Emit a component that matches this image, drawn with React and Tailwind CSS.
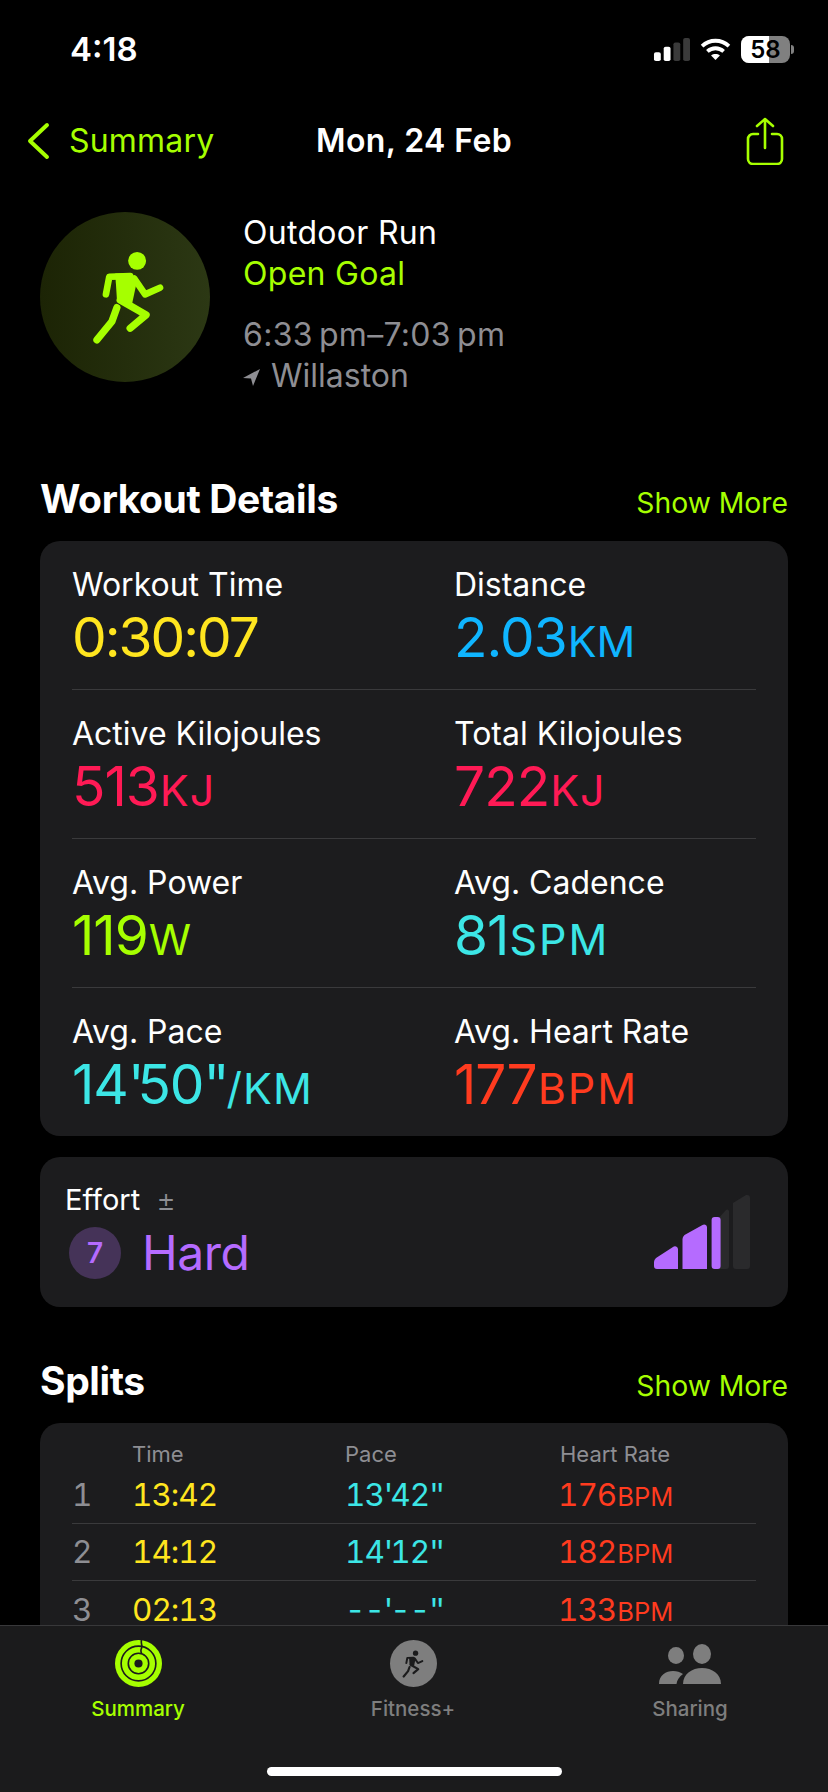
import React from "react";

const F = { fontFamily: '"Inter","Liberation Sans",sans-serif' };

function Metric({ label, value, unit, color, valueClass = "tracking-[-1px]", unitClass = "tracking-[1px]" }) {
  return (
    <div className="flex-1 min-w-0">
      <div className="text-[32px] leading-[38px] text-white">{label}</div>
      <div className={`text-[55px] leading-[58px] mt-[4px] ${color} ${valueClass}`}>
        {value}
        <span className={`text-[43px] ml-[1px] ${unitClass}`}>{unit}</span>
      </div>
    </div>
  );
}

function Row({ left, right, last }) {
  return (
    <div className={`mx-[32px] h-[149px] pt-[25px] flex ${last ? "" : "border-b border-[#3a3a3c]"}`}>
      <div className="w-[382px]"><Metric {...left} /></div>
      <div className="flex-1"><Metric {...right} /></div>
    </div>
  );
}

function Pr({ className, children }) {
  return <span className={className}>{children}</span>;
}

function Pace({ a, b }) {
  return (
    <>
      {a}
      <span className="tracking-[-3px]">'</span>
      {b}
      <span className="tracking-[-3px]">''</span>
    </>
  );
}

function SplitRow({ n, time, pace, hr, last }) {
  return (
    <div className={`flex h-[57px] items-center text-[31.5px] tabular-nums tracking-[-1px] ${last ? "" : "border-b border-[#3a3a3c]"}`}>
      <div className="w-[60px] text-[#8e8e93]">{n}</div>
      <div className="w-[213px] text-[#ffe51f]">{time}</div>
      <div className="w-[215px] text-[#3ce6e6]">{pace}</div>
      <div className="text-[#ff3b1f] -ml-[2px]">{hr}<span className="text-[25.5px] ml-[1px] tracking-[0px]">BPM</span></div>
    </div>
  );
}

function Runner({ width, height, color }) {
  return (
    <svg width={width} height={height} viewBox="95 85 220 285" fill="none" stroke={color} strokeLinecap="round" strokeLinejoin="round">
      <circle cx="231" cy="117" r="27" fill={color} stroke="none" />
      <path d="M137 218L147 165 210 163" strokeWidth="20" />
      <path d="M165 155L215 155 228 190 215 250 170 232Z" fill={color} stroke="none" />
      <path d="M222 170L255 218 300 198" strokeWidth="20" />
      <path d="M180 235L258 280 210 320" strokeWidth="22" />
      <path d="M170 258L155 300 110 355" strokeWidth="22" />
    </svg>
  );
}

export default function App() {
  return (
    <div style={F} className="relative w-[828px] h-[1792px] bg-black overflow-hidden text-white">
      {/* status bar */}
      <div className="flex items-center justify-between h-[99px] pl-[70px] pr-[34px]">
        <div className="text-[33px] font-semibold">4:18</div>
        <div className="flex items-center gap-[10px]">
          <svg width="37" height="23" viewBox="0 0 38 26" preserveAspectRatio="none">
            <rect x="1" y="16" width="7" height="10" rx="2" fill="#fff" />
            <rect x="11" y="10" width="7" height="16" rx="2" fill="#fff" />
            <rect x="21" y="5" width="7" height="21" rx="2" fill="#3a3a3a" />
            <rect x="31" y="0" width="7" height="26" rx="2" fill="#3a3a3a" />
          </svg>
          <svg width="31" height="23" viewBox="0 0 32 24" fill="none" stroke="#fff" strokeWidth="4">
            <path d="M2 8.5C10 1 22 1 30 8.5" />
            <path d="M7.5 14c5-4.4 12-4.4 17 0" />
            <path d="M16 23l-4.6-4.8c2.6-2 6.600-2 9.200 0z" fill="#fff" stroke="none" />
          </svg>
          <div className="flex items-center">
            <div className="relative w-[49px] h-[27px] rounded-[8px] bg-[#808080] flex items-center justify-center">
              <div className="absolute left-0 top-0 bottom-0 w-[28px] rounded-l-[8px] bg-white" />
              <span className="relative text-[24px] font-semibold text-black leading-[27px]">58</span>
            </div>
            <div className="w-[3px] h-[9px] ml-[1px] rounded-r-full bg-[#808080]" />
          </div>
        </div>
      </div>

      {/* nav */}
      <div className="relative h-[84px] flex items-center pl-[26px] pr-[44px] justify-between">
        <div className="flex items-center text-[#a6ff00]">
          <svg width="24" height="38" viewBox="0 0 24 38" fill="none" stroke="#a6ff00" strokeWidth="4" strokeLinecap="round" strokeLinejoin="round">
            <path d="M21 3L4 19l17 16" />
          </svg>
          <span className="text-[32px] ml-[19px] tracking-[0.2px]">Summary</span>
        </div>
        <div className="absolute left-[316px] text-[32px] font-semibold tracking-[0.4px]">Mon, 24 Feb</div>
        <svg width="38" height="48" viewBox="0 0 38 48" fill="none" stroke="#a6ff00" strokeWidth="2.6" strokeLinecap="round" strokeLinejoin="round">
          <path d="M12 17H7a5 5 0 0 0-5 5v20a5 5 0 0 0 5 5h24a5 5 0 0 0 5-5V22a5 5 0 0 0-5-5h-5" />
          <path d="M19 31V2M11 9l8-7 8 7" />
        </svg>
      </div>

      {/* header */}
      <div className="flex pl-[40px] pt-[29px] h-[281px]">
        <div className="w-[170px] h-[170px] rounded-full bg-gradient-to-r from-[#1c2405] to-[#2c3814] flex items-center justify-center">
          <div className="ml-[6px]"><Runner width={73} height={95} color="#a6ff00" /></div>
        </div>
        <div className="ml-[33px]">
          <div className="text-[32px] leading-[41px] tracking-[0.3px]">Outdoor Run</div>
          <div className="text-[32px] leading-[41px] text-[#a6ff00] tracking-[0.3px]">Open Goal</div>
          <div className="text-[32px] leading-[41px] text-[#8e8e93] mt-[20px] tracking-[0.3px]">6:33{"\u2009"}pm–7:03{"\u2009"}pm</div>
          <div className="flex items-center text-[32px] leading-[41px] text-[#8e8e93]">
            <svg width="17" height="17" viewBox="0 0 17 17" className="mr-[11px] mt-[3px]">
              <path d="M17 0L0 9l8 .5L10 17z" fill="#8e8e93" />
            </svg>
            Willaston
          </div>
        </div>
      </div>

      {/* workout details */}
      <div className="flex items-end justify-between px-[40px] h-[60px] -mt-[2px]">
        <div className="text-[39px] font-bold leading-[46px] tracking-[-0.4px]">Workout Details</div>
        <div className="text-[28.3px] text-[#a6ff00] leading-[38px]">Show More</div>
      </div>
      <div className="mx-[40px] mt-[19px] rounded-[20px] bg-[#1c1c1e] h-[595px]">
        <Row
          left={{ label: "Workout Time", value: "0:30:07", unit: "", color: "text-[#ffe51f]", valueClass: "tracking-[-2px]" }}
          right={{ label: "Distance", value: "2.03", unit: "KM", color: "text-[#0fb5ff]", unitClass: "tracking-[0px]" }}
        />
        <Row
          left={{ label: "Active Kilojoules", value: "513", unit: "KJ", color: "text-[#ff1a55]" }}
          right={{ label: "Total Kilojoules", value: "722", unit: "KJ", color: "text-[#ff1a55]" }}
        />
        <Row
          left={{ label: "Avg. Power", value: "119", unit: "W", color: "text-[#a6ff00]" }}
          right={{ label: "Avg. Cadence", value: "81", unit: "SPM", color: "text-[#3ce6e6]", unitClass: "tracking-[2px]" }}
        />
        <Row
          last
          left={{
            label: "Avg. Pace",
            value: (
              <>
                14<Pr className="tracking-[-7px]">'</Pr>50<Pr className="tracking-[-7px]">''</Pr>
              </>
            ),
            unit: <span className="ml-[3px]">/KM</span>,
            color: "text-[#3ce6e6]",
          }}
          right={{ label: "Avg. Heart Rate", value: "177", unit: "BPM", color: "text-[#ff3b1f]", unitClass: "tracking-[2px]" }}
        />
      </div>

      {/* effort */}
      <div className="mx-[40px] mt-[21px] rounded-[20px] bg-[#1c1c1e] h-[150px] flex items-center justify-between pl-[25px] pr-[38px]">
        <div>
          <div className="flex items-center text-[29px] leading-[36px] -mt-[3px]">
            Effort
            <span className="ml-[16px] text-[30px] font-light text-[#8e8e93] leading-[36px]">±</span>
          </div>
          <div className="flex items-center mt-[9px] ml-[4px]">
            <div className="w-[52px] h-[52px] rounded-full bg-[#453358] flex items-center justify-center text-[#b56bff] text-[28px] font-semibold">7</div>
            <div className="text-[48px] leading-[52px] text-[#b56bff] ml-[21px] tracking-[-0.5px]">Hard</div>
          </div>
        </div>
        <svg width="96" height="74" viewBox="0 0 96 74">
          <path d="M79 8L92 0h1a3 3 0 0 1 3 3v68a3 3 0 0 1-3 3H82a3 3 0 0 1-3-3z" fill="#2a2a2c" />
          <path d="M62 26L72 15a2 2 0 0 1 3 1v55a3 3 0 0 1-3 3H62z" fill="#2a2a2c" />
          <path d="M0 67q0-2 2-4l17-11a3 3 0 0 1 5 2v20H3a3 3 0 0 1-3-3z" fill="#b56bff" />
          <path d="M28.5 44q0-2 2-4l18-10a3 3 0 0 1 4.500 2v42H28.500z" fill="#b56bff" />
          <rect x="57.600" y="22" width="9" height="52" rx="3" fill="#b56bff" />
        </svg>
      </div>

      {/* splits */}
      <div className="flex items-end justify-between px-[40px] h-[60px] mt-[38px]">
        <div className="text-[39px] font-bold leading-[48px] tracking-[-0.4px]">Splits</div>
        <div className="text-[28.3px] text-[#a6ff00] leading-[38px]">Show More</div>
      </div>
      <div className="mx-[40px] mt-[18px] rounded-t-[20px] bg-[#1c1c1e] h-[240px] px-[32px]">
        <div className="flex pt-[17px] h-[44px] text-[22px] leading-[28px] text-[#8e8e93]">
          <div className="w-[60px]" />
          <div className="w-[213px]">Time</div>
          <div className="w-[215px]">Pace</div>
          <div>Heart Rate</div>
        </div>
        <SplitRow n="1" time="13:42" pace={<Pace a="13" b="42" />} hr="176" />
        <SplitRow n="2" time="14:12" pace={<Pace a="14" b="12" />} hr="182" />
        <SplitRow n="3" time="02:13" pace={<Pace a="--" b="--" />} hr="133" last />
      </div>

      {/* tab bar */}
      <div className="absolute left-0 right-0 bottom-0 h-[167px] bg-[#1b1b1c] border-t border-[#38383a]">
        <div className="flex pt-[14px]">
          <div className="absolute left-[90px] w-[96px] flex flex-col items-center">
            <svg width="47" height="47" viewBox="0 0 46 46" fill="none">
              <circle cx="23" cy="23" r="23" fill="#a6ff00" />
              <circle cx="23" cy="23" r="17" stroke="#1b1b1c" strokeWidth="1.6" />
              <circle cx="23" cy="23" r="10" stroke="#1b1b1c" strokeWidth="1.6" />
              <circle cx="23" cy="23" r="4" fill="#1b1b1c" />
              <path d="M26 0c-1 3 1 5 0 8-1 2-1 3 0 5" stroke="#1b1b1c" strokeWidth="1.6" />
            </svg>
            <div className="text-[20.5px] font-medium text-[#a6ff00] mt-[9px] leading-[26px] whitespace-nowrap">Summary</div>
          </div>
          <div className="absolute left-[365px] w-[96px] flex flex-col items-center">
            <div className="w-[47px] h-[47px] rounded-full bg-[#7e7e7e] flex items-center justify-center">
              <Runner width={22} height={28} color="#1b1b1c" />
            </div>
            <div className="text-[20.5px] font-medium text-[#7e7e7e] mt-[9px] leading-[26px] whitespace-nowrap">Fitness+</div>
          </div>
          <div className="absolute left-[642px] w-[96px] flex flex-col items-center">
            <svg width="62" height="47" viewBox="0 -4 62 47" fill="#7e7e7e">
              <ellipse cx="17" cy="11.5" rx="8" ry="8.5" />
              <path d="M0 40C0 31 7 27 14 27c4 0 7 1 10 3-4 3-6 6-6.500 10z" />
              <ellipse cx="43" cy="10" rx="9" ry="10" />
              <path d="M24 40C24 30 33 24 43 24s19 6 19 16z" />
            </svg>
            <div className="text-[20.5px] font-medium text-[#7e7e7e] mt-[9px] leading-[26px] whitespace-nowrap">Sharing</div>
          </div>
        </div>
        <div className="absolute left-[267px] bottom-[16px] w-[295px] h-[9px] rounded-full bg-white" />
      </div>
    </div>
  );
}
